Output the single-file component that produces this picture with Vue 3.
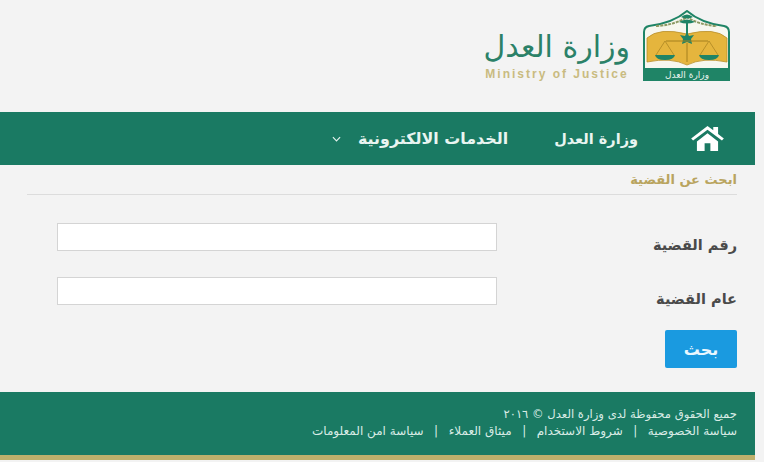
<script setup>
const navItems = [
  { id: 'ministry', label: 'وزارة العدل' },
  { id: 'services', label: 'الخدمات الالكترونية', arrow: true }
]

const fields = [
  { id: 'number', label: 'رقم القضية' },
  { id: 'year', label: 'عام القضية' }
]

const footerLinks = ['سياسة الخصوصية', 'شروط الاستخدام', 'ميثاق العملاء', 'سياسة امن المعلومات']
</script>

<template>
  <div class="page" dir="rtl">
    <header class="top">
      <svg class="emblem" viewBox="0 0 87 71" width="87" height="71">
        <path d="M1 70V22Q1 17 6 16Q30 13 44 1Q58 13 81 16Q86 17 86 22V70Z" fill="#f7f7ef" stroke="#1f8466" stroke-width="2" />
        <path d="M13 16Q32 15 44 7Q56 15 74 16" fill="none" stroke="#8d9a63" stroke-width="2" stroke-dasharray="3 1" />
        <path d="M4 52V28Q16 17 44 24Q72 17 84 28V52Q60 47 44 55Q28 47 4 52Z" fill="#e5b53d" stroke="#b98f2a" stroke-width=".8" />
        <path d="M44 10V28" stroke="#1f8466" stroke-width="2" />
        <path d="M38 7Q44 2 50 7Q44 10 38 7ZM36 12Q44 7 52 12Q44 15 36 12Z" fill="#1f8466" />
        <path d="M37 25L42 26L44 22L46 26L51 25L48 29L49 34L44 32L39 34L40 29Z" fill="#1f8466" />
        <path d="M44 33V52M23 31L65 31" stroke="#a5801f" stroke-width="1" />
        <path d="M22 31L13 45M22 31L31 45M66 31L57 45M66 31L75 45" stroke="#a5801f" stroke-width=".7" />
        <path d="M12 45H32Q31 50 22 50Q13 50 12 45ZM56 45H76Q75 50 66 50Q57 50 56 45Z" fill="#1f8466" />
        <rect x="0" y="58" width="87" height="13" fill="#1f8466" />
        <text x="44" y="68" class="emblem-text" text-anchor="middle">وزارة العدل</text>
      </svg>
      <div class="brand">
        <div class="brand-ar">وزارة العدل</div>
        <div class="brand-en" dir="ltr">Ministry of Justice</div>
      </div>
    </header>

    <nav class="nav">
      <svg class="home" viewBox="0 0 34 26" width="33" height="25">
        <path d="M0 13L17 0L23 4.500V1H28V8.400L34 13L32 15L17 4L2 15Z" fill="#fff" />
        <path d="M6 16L17 7.500L28 16V26H20V18H14V26H6Z" fill="#fff" />
      </svg>
      <a v-for="item in navItems" :key="item.id" class="nav-link" :class="item.id">
        {{ item.label }}
        <svg v-if="item.arrow" class="chevron" viewBox="0 0 10 6" width="9" height="6">
          <path d="M1 1L5 5L9 1" fill="none" stroke="#e4f2ee" stroke-width="1.300" />
        </svg>
      </a>
    </nav>

    <main class="content">
      <h2 class="title">ابحث عن القضية</h2>
      <form class="case-form" @submit.prevent>
        <div v-for="field in fields" :key="field.id" class="row">
          <label :for="field.id">{{ field.label }}</label>
          <input :id="field.id" type="text" />
        </div>
        <button type="submit">بحث</button>
      </form>
    </main>

    <footer class="footer">
      <p class="rights">جميع الحقوق محفوظة لدى وزارة العدل © ٢٠١٦</p>
      <p class="links">
        <template v-for="(link, i) in footerLinks" :key="link">
          <span v-if="i" class="sep">|</span>
          <a>{{ link }}</a>
        </template>
      </p>
    </footer>
  </div>
</template>

<style scoped>
.page {
  width: 764px;
  height: 462px;
  overflow: hidden;
  background: #f3f3f3;
  font-family: "DejaVu Sans", "Noto Sans", sans-serif;
}

.top {
  height: 112px;
  box-sizing: border-box;
  padding: 10px 34px 0 0;
  display: flex;
  align-items: flex-start;
  gap: 13px;
}

.emblem {
  flex: none;
}

.emblem-text {
  font-size: 9px;
  fill: #e8f3ee;
}

.brand {
  margin-top: 17px;
  width: 146px;
  text-align: center;
}

.brand-ar {
  font-family: "DejaVu Serif", "DejaVu Sans", serif;
  font-size: 30px;
  line-height: 40px;
  color: #2b8168;
  white-space: nowrap;
}

.brand-en {
  font-family: "Liberation Sans", Arial, sans-serif;
  font-size: 12px;
  font-weight: bold;
  line-height: 14px;
  letter-spacing: 2px;
  color: #c9bb80;
  white-space: nowrap;
}

.nav {
  width: 755px;
  height: 53px;
  margin-right: 9px;
  background: #1a7a63;
  display: flex;
  align-items: center;
  padding-right: 31px;
  box-sizing: border-box;
  color: #e9f5f1;
}

.home {
  flex: none;
}

.nav-link {
  font-size: 14.500px;
  font-weight: bold;
  white-space: nowrap;
  display: flex;
  align-items: center;
}

.ministry {
  margin-right: 53px;
}

.services {
  margin-right: 46px;
  font-size: 15.900px;
}

.chevron {
  margin-right: 17px;
}

.content {
  height: 227px;
  padding: 0 27px;
}

.title {
  margin: 0;
  height: 29px;
  border-bottom: 1px solid #dcdcdc;
  font-size: 13px;
  font-weight: bold;
  line-height: 29px;
  color: #b9a45f;
}

.case-form {
  padding-top: 28px;
}

.row {
  height: 54px;
  display: flex;
  justify-content: space-between;
}

.row label {
  font-size: 14.500px;
  font-weight: bold;
  line-height: 17px;
  margin-top: 14px;
  color: #4a4a4a;
  white-space: nowrap;
}

.row input {
  width: 440px;
  height: 28px;
  box-sizing: border-box;
  margin: 0 0 0 30px;
  border: 1px solid #d4d4d4;
  background: #fff;
  padding: 0 6px;
}

button {
  display: block;
  width: 72px;
  height: 38px;
  margin-top: -1px;
  border: 0;
  border-radius: 2px;
  background: #1a9ae0;
  color: #eaf7ff;
  font-family: inherit;
  font-size: 16px;
  font-weight: bold;
}

.footer {
  width: 755px;
  height: 68px;
  box-sizing: border-box;
  margin-right: 9px;
  padding: 14px 18px 0 0;
  background: #1a7a63;
  border-bottom: 5px solid #bdb06c;
  color: #d9ece6;
  font-size: 12px;
  line-height: 17px;
}

.footer p {
  margin: 0;
  white-space: nowrap;
}

.footer .rights {
  font-size: 11.600px;
}

.sep {
  margin: 0 10.500px;
}
</style>

<style>
html, body {
  background: #f3f3f3;
}
</style>
